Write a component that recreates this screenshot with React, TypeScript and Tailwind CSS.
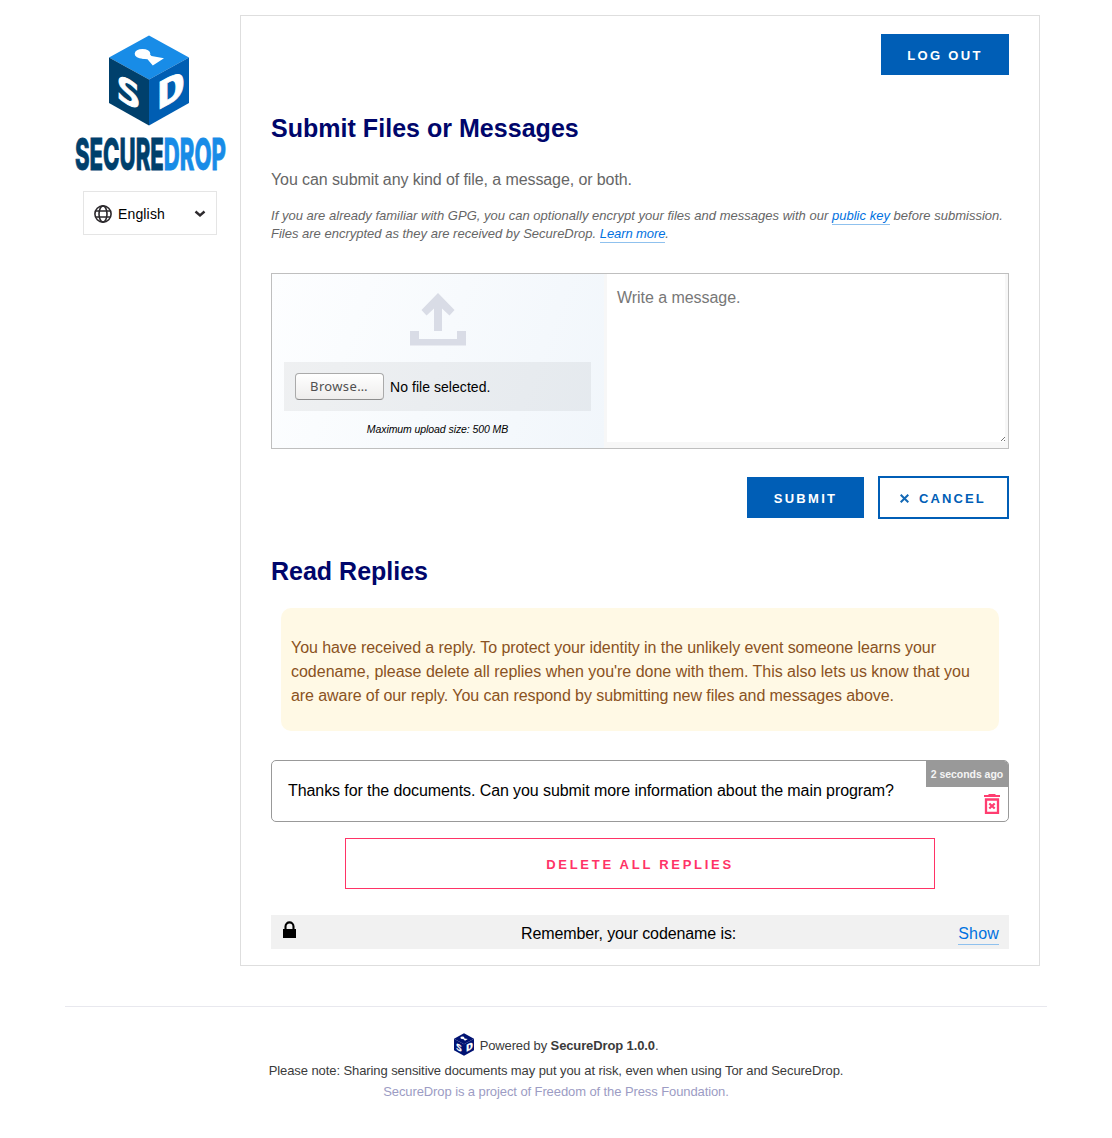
import React from "react";

function Cube({ className, mono = false }: { className: string; mono?: boolean }) {
  const navy = "#001272";
  return (
    <svg className={className} viewBox="0 0 80 90" fontFamily="DejaVu Sans Mono" fontWeight="700" fill="#fff" stroke="#fff" strokeWidth=".8">
      <g stroke="none">
        <path d="M40 0 80 22 40 44 0 22Z" fill={mono ? navy : "#188ce7"} />
        <path d="M0 22 40 44V90L0 67.500Z" fill={mono ? navy : "#00406c"} />
        <path d="M80 22 40 44V90L80 67.500Z" fill={mono ? navy : "#005eb3"} />
        <ellipse cx="33.500" cy="18.300" rx="7.800" ry="4.900" />
        <path d="M39 17 42.500 20.500 55 22.800 43.800 30 38.500 23.700 33 23.200Z" />
      </g>
      <text transform="matrix(1 .54 0 1 7.500 62.500)" x="0" y="0" fontSize="34" textLength="24" lengthAdjust="spacingAndGlyphs">S</text>
      <text transform="matrix(1 -.54 0 1 48 75)" x="0" y="0" fontSize="37" textLength="28" lengthAdjust="spacingAndGlyphs">D</text>
    </svg>
  );
}

function Globe() {
  return (
    <svg className="h-[18px] w-[18px]" viewBox="0 0 18 18" fill="none" stroke="#2d2a2e" strokeWidth="1.600">
      <circle cx="9" cy="9" r="8.100" />
      <ellipse cx="9" cy="9" rx="4" ry="8.100" />
      <path d="M1.800 6H16.200M1.800 12H16.200" strokeWidth="1.500" />
    </svg>
  );
}

export default function App() {
  return (
    <div className="h-[1138px] w-[1112px] overflow-hidden bg-white pt-[15px] font-['Liberation_Sans',sans-serif] text-base text-black">
      <div className="ml-[66px] flex">
        <aside className="flex h-[951px] w-[174px] shrink-0 flex-col pt-[20px]">
          <Cube className="ml-[43px] h-[91px] w-[80px]" />
          <svg className="ml-[9px] h-[56px] w-[154px] overflow-visible" viewBox="0 0 154 56" fontFamily="Inter" fontWeight="800" fontSize="44">
            <text x="0" y="43.500" textLength="151" lengthAdjust="spacingAndGlyphs" strokeWidth=".8">
              <tspan fill="#00406c" stroke="#00406c">SECURE</tspan><tspan fill="#188ce7" stroke="#188ce7">DROP</tspan>
            </text>
          </svg>
          <div className="mt-[9px] ml-[17px] flex h-[44px] w-[134px] items-center border border-[#e5e5e5] pt-px pl-[10px]">
            <Globe />
            <span className="ml-[6px] pt-px text-[14px] tracking-[.15px]">English</span>
            <svg className="ml-auto mr-[10px] h-[8px] w-[12px]" viewBox="0 0 12 8" fill="none" stroke="#2d2a2e" strokeWidth="2.400"><path d="M1.500 1.500 6 5.500 10.500 1.500" /></svg>
          </div>
        </aside>

        <main className="h-[951px] w-[800px] border border-[#dedede] px-[30px] pt-[18px]">
          <button className="ml-auto block h-[41px] w-[128px] bg-[#005eb6] pt-[2px] text-[13px] font-bold tracking-[2.350px] text-white">LOG OUT</button>
          <h1 className="mt-[38px] text-[25px] leading-[30px] font-bold tracking-[.03px] text-[#00066b]">Submit Files or Messages</h1>
          <p className="mt-[25px] text-[16px] leading-[24px] tracking-[-.095px] text-[#666]">You can submit any kind of file, a message, or both.</p>
          <p className="mt-[15px] text-[13px] leading-[18px] whitespace-nowrap text-[#666] italic">
            <span className="tracking-[.017px]">If you are already familiar with GPG, you can optionally encrypt your files and messages with our <a className="border-b border-[#8fc1ee] pb-px text-[#0071e0]">public key</a> before submission.</span><br />
            Files are encrypted as they are received by SecureDrop. <a className="border-b border-[#8fc1ee] pb-px tracking-[-.1px] text-[#0071e0]">Learn more</a>.
          </p>

          <div className="mt-[30px] flex h-[176px] border border-[#bfbfbf] bg-[#f7f7f7]">
            <div className="flex w-[332px] flex-col bg-linear-[110deg] from-[#fdfeff] to-[#f1f6fb] px-[12px] pt-[19px]">
              <svg className="ml-[126px] h-[53px] w-[56px] shrink-0" viewBox="0 0 56 53" fill="#d9dce6">
                <path d="M28 0 44.500 17 39.500 22.500 32 15.500V38H24V15.500L16.500 22.500 11.500 17Z" />
                <path d="M0 38H9V46H47V38H56V52.500H0Z" />
              </svg>
              <div className="mt-[16px] flex h-[49px] w-[307px] shrink-0 items-center bg-black/5 pl-[11px]">
                <button className="h-[27px] w-[89px] rounded-[4px] border border-[#aaa] border-b-[#8d8d8d] bg-linear-to-b from-white to-[#eeedec] font-['Noto_Sans'] text-[13px] leading-[24px] tracking-[.35px] text-[#505050]"><span className="relative -top-px">Browse<span className="tracking-[1.500px]">…</span></span></button>
                <span className="ml-[6px] pt-[2px] text-[14px] tracking-[.05px]">No file selected.</span>
              </div>
              <div className="mt-[12px] w-[307px] text-center text-[10.500px] leading-[13px] tracking-[-.08px] italic">Maximum upload size: 500 MB</div>
            </div>
            <div className="relative ml-[3px] h-[168px] w-[398px] bg-white px-[10px] pt-[12px] leading-[24px] tracking-[-.05px] text-[#777]">
              Write a message.
              <svg className="absolute right-0 bottom-px h-[4px] w-[4px]" viewBox="0 0 4 4" stroke="#777"><path d="M0 4 4 0M3 4 4 3" /></svg>
            </div>
          </div>

          <div className="mt-[27px] flex h-[43px] items-center justify-end gap-[14px] text-[13px] font-bold tracking-[2.300px]">
            <button className="h-[41px] w-[117px] bg-[#005eb6] pt-[2px] text-white">SUBMIT</button>
            <button className="flex h-[43px] w-[131px] items-center border-2 border-[#005eb6] pt-[2px] pl-[20px] text-[#005eb6]">
              <svg className="mr-[10px] h-[9px] w-[9px]" viewBox="0 0 9 9" stroke="#1268b5" strokeWidth="2"><path d="M.7.7 8.300 8.300M8.300.7.7 8.300" /></svg><span className="tracking-[2.100px]">CANCEL</span>
            </button>
          </div>

          <h2 className="mt-[37px] text-[25px] leading-[30px] font-bold text-[#00066b]">Read Replies</h2>
          <div className="mx-[10px] mt-[22px] h-[123px] rounded-[10px] bg-[#fff9e5] px-[10px] pt-[28px] leading-[24px] whitespace-nowrap text-[#8a5222]">
            <span className="tracking-[-.063px]">You have received a reply. To protect your identity in the unlikely event someone learns your</span><br />
            <span className="tracking-[-.017px]">codename, please delete all replies when you're done with them. This also lets us know that you</span><br />
            <span className="tracking-[-.073px]">are aware of our reply. You can respond by submitting new files and messages above.</span>
          </div>

          <div className="mt-[29px] flex h-[62px] justify-between overflow-hidden rounded-[5px] border border-[#999]">
            <p className="pt-[18px] pl-[16px] leading-[24px] tracking-[-.085px]">Thanks for the documents. Can you submit more information about the main program?</p>
            <div className="flex w-[82px] flex-col">
              <time className="h-[26px] bg-[#999] text-center text-[10.500px] leading-[27px] font-bold tracking-[-.05px] whitespace-nowrap text-[#f4f4f4]">2 seconds ago</time>
              <svg className="mt-[7px] ml-[58px] h-[20px] w-[16px]" viewBox="0 0 16 20" fill="none" stroke="#ff3d70">
                <path d="M0 2H16M4.500.7H11.500" strokeWidth="2" />
                <path d="M2 5.500H14V19H2Z" strokeWidth="2.300" />
                <path d="M5.300 9.500 10.700 14.500M10.700 9.500 5.300 14.500" strokeWidth="2.200" />
              </svg>
            </div>
          </div>
          <button className="mx-auto mt-[16px] block h-[51px] w-[590px] border border-[#ff3366] pt-[2px] text-[13px] font-bold tracking-[2.720px] text-[#ff3366]">DELETE ALL REPLIES</button>
          <div className="mt-[26px] flex h-[34px] bg-[#f1f1f1] px-[10px] leading-[24px]">
            <svg className="mt-[6px] ml-[2px] h-[17px] w-[13px]" viewBox="0 0 13 17"><path d="M0 8H13V17H0Z" /><path d="M2.500 9V5.500C2.500 0 10.500 0 10.500 5.500V9" fill="none" stroke="#000" strokeWidth="2.100" /></svg>
            <span className="mt-[7px] ml-[225px] leading-[24px] tracking-[-.1px]">Remember, your codename is:</span>
            <a className="mt-[9px] ml-auto h-[21px] border-b border-[#8fc1ee] leading-[20px] tracking-[.2px] text-[#0071e0]">Show</a>
          </div>
        </main>
      </div>

      <footer className="mt-[40px] ml-[65px] w-[982px] border-t border-[#e8e8ee] pt-[25px] text-center text-[13px] text-[#3b3b3b]">
        <div className="flex h-[24px] items-center justify-center">
          <Cube mono className="mr-[6px] h-[23px] w-[20px]" />
          <span className="pt-[3px] tracking-[-.12px]">Powered by <b>SecureDrop 1.0.0</b>.</span>
        </div>
        <p className="mt-[4px] leading-[21px] tracking-[-.085px]">Please note: Sharing sensitive documents may put you at risk, even when using Tor and SecureDrop.</p>
        <p className="leading-[21px] tracking-[-.095px] text-[#9c9cc4]">SecureDrop is a project of Freedom of the Press Foundation.</p>
      </footer>
    </div>
  );
}
